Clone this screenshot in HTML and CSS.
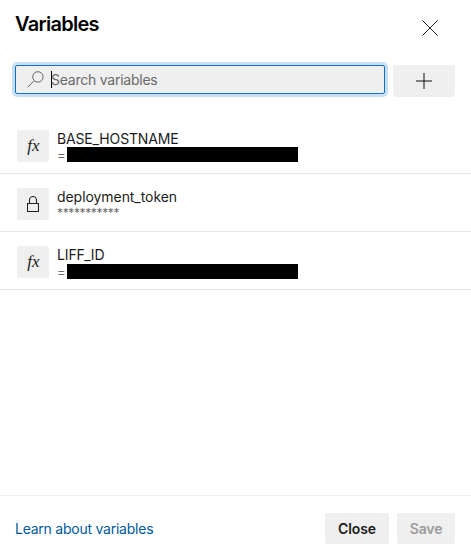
FILE: index.html
```html
<!DOCTYPE html>
<html lang="en">
<head>
<meta charset="utf-8">
<title>Variables</title>
<link rel="stylesheet" href="styles.css">
</head>
<body>
<main class="panel">
  <header class="header">
    <h1 class="title">Variables</h1>
    <button class="dismiss" aria-label="Close panel">
      <svg width="16" height="16" viewBox="0 0 16 16"><path d="M.4.4l15.2 15.2M15.6.4L.4 15.6"/></svg>
    </button>
  </header>
  <div class="toolbar">
    <div class="search">
      <svg class="search-icon" width="17" height="17" viewBox="0 0 17 17"><circle cx="10.9" cy="5.9" r="5.2"/><path d="M7.2 9.7L.6 16.3"/></svg>
      <span class="caret"></span>
      <span class="placeholder">Search variables</span>
    </div>
    <button class="add" aria-label="Add variable">
      <svg width="16" height="16" viewBox="0 0 16 16"><path d="M8 0v16"/><path d="M0 8h16"/></svg>
    </button>
  </div>
  <ul class="list">
    <li class="row">
      <span class="tile fx">fx</span>
      <div class="info">
        <div class="name base">BASE_HOSTNAME</div>
        <div class="value"><span class="equals">=</span><span class="redacted"></span></div>
      </div>
    </li>
    <li class="row">
      <span class="tile"><svg class="lock" width="12" height="17" viewBox="0 0 12 17"><path d="M.5 7.5h11v8H.5zM2.5 7.5V4.2a3.5 3.7 0 0 1 7 0v3.3"/></svg></span>
      <div class="info">
        <div class="name token">deployment_token</div>
        <div class="value secret">***********</div>
      </div>
    </li>
    <li class="row last">
      <span class="tile fx">fx</span>
      <div class="info">
        <div class="name liff">LIFF_ID</div>
        <div class="value"><span class="equals">=</span><span class="redacted"></span></div>
      </div>
    </li>
  </ul>
  <footer class="footer">
    <a class="link">Learn about variables</a>
    <button class="btn close">Close</button>
    <button class="btn save" disabled>Save</button>
  </footer>
</main>
</body>
</html>
```

FILE: styles.css
```css
* { box-sizing: border-box; }
body {
  margin: 0;
  background: #fff;
  color: #1b1b1b;
  font: 14px/20px Inter, "Liberation Sans", sans-serif;
}
button { border: 0; padding: 0; font: inherit; }
svg { display: block; fill: none; stroke: #222; stroke-width: 1; }
.panel { display: flex; flex-direction: column; height: 555px; overflow: hidden; }
.header {
  display: flex;
  justify-content: space-between;
  align-items: flex-start;
  height: 65px;
  padding: 10px 33px 0 15px;
}
.title { margin: 0; font-size: 20px; line-height: 28px; font-weight: 600; letter-spacing: -0.72px; color: #000; }
.dismiss { margin-top: 10px; background: none; }
.toolbar { display: flex; gap: 8px; align-items: flex-start; height: 51px; padding: 0 16px 0 15px; }
.search {
  display: flex;
  align-items: center;
  width: 370px;
  height: 29px;
  padding-left: 11px;
  background: #efefef;
  border: 1px solid #0f72c9;
  border-radius: 2px;
  box-shadow: 0 0 0 3px #c7e0f4;
}
.search-icon { stroke: #666; }
.caret { width: 1px; height: 17px; margin-left: 7px; background: #000; }
.placeholder { margin-left: -1px; color: #6a6a6a; letter-spacing: -0.24px; }
.add {
  display: flex;
  align-items: center;
  justify-content: center;
  width: 62px;
  height: 32px;
  background: #efefef;
  border-radius: 2px;
}
.add svg { stroke: rgba(0, 0, 0, .47); stroke-width: 2; }
.list { margin: 0; padding: 0; list-style: none; flex: 1; }
.row { display: flex; gap: 8px; height: 58px; padding: 14px 17px 0; border-bottom: 1px solid #e7e7e7; }
.tile {
  display: flex;
  align-items: center;
  justify-content: center;
  width: 32px;
  height: 32px;
  background: #efefef;
  border-radius: 2px;
}
.fx { font: italic 17px/30px "Liberation Serif", serif; padding: 0 0 1px 1px; }
.lock { stroke-width: 1.1; }
.name { height: 17px; line-height: 18px; letter-spacing: -0.15px; }
.token { letter-spacing: -0.06px; }
.value { display: flex; height: 15px; font-size: 12px; line-height: 16px; color: #6b6b6b; }
.secret { letter-spacing: -0.37px; }
.equals { width: 10px; font-size: 13px; }
.redacted { width: 231px; height: 15px; background: #000; }
.last .name { height: 18px; }
.footer {
  display: flex;
  align-items: flex-start;
  height: 60px;
  padding: 17px 16px 0 15px;
  border-top: 1px solid #f1f1f1;
}
.link { flex: 1; line-height: 32px; letter-spacing: -0.24px; color: #005a9e; }
.btn { height: 31px; background: #efefef; border-radius: 2px; font-weight: 600; letter-spacing: -0.1px; color: #1b1b1b; }
.close { width: 64px; margin-right: 8px; }
.save { width: 58px; color: #9b9b9b; }
```
